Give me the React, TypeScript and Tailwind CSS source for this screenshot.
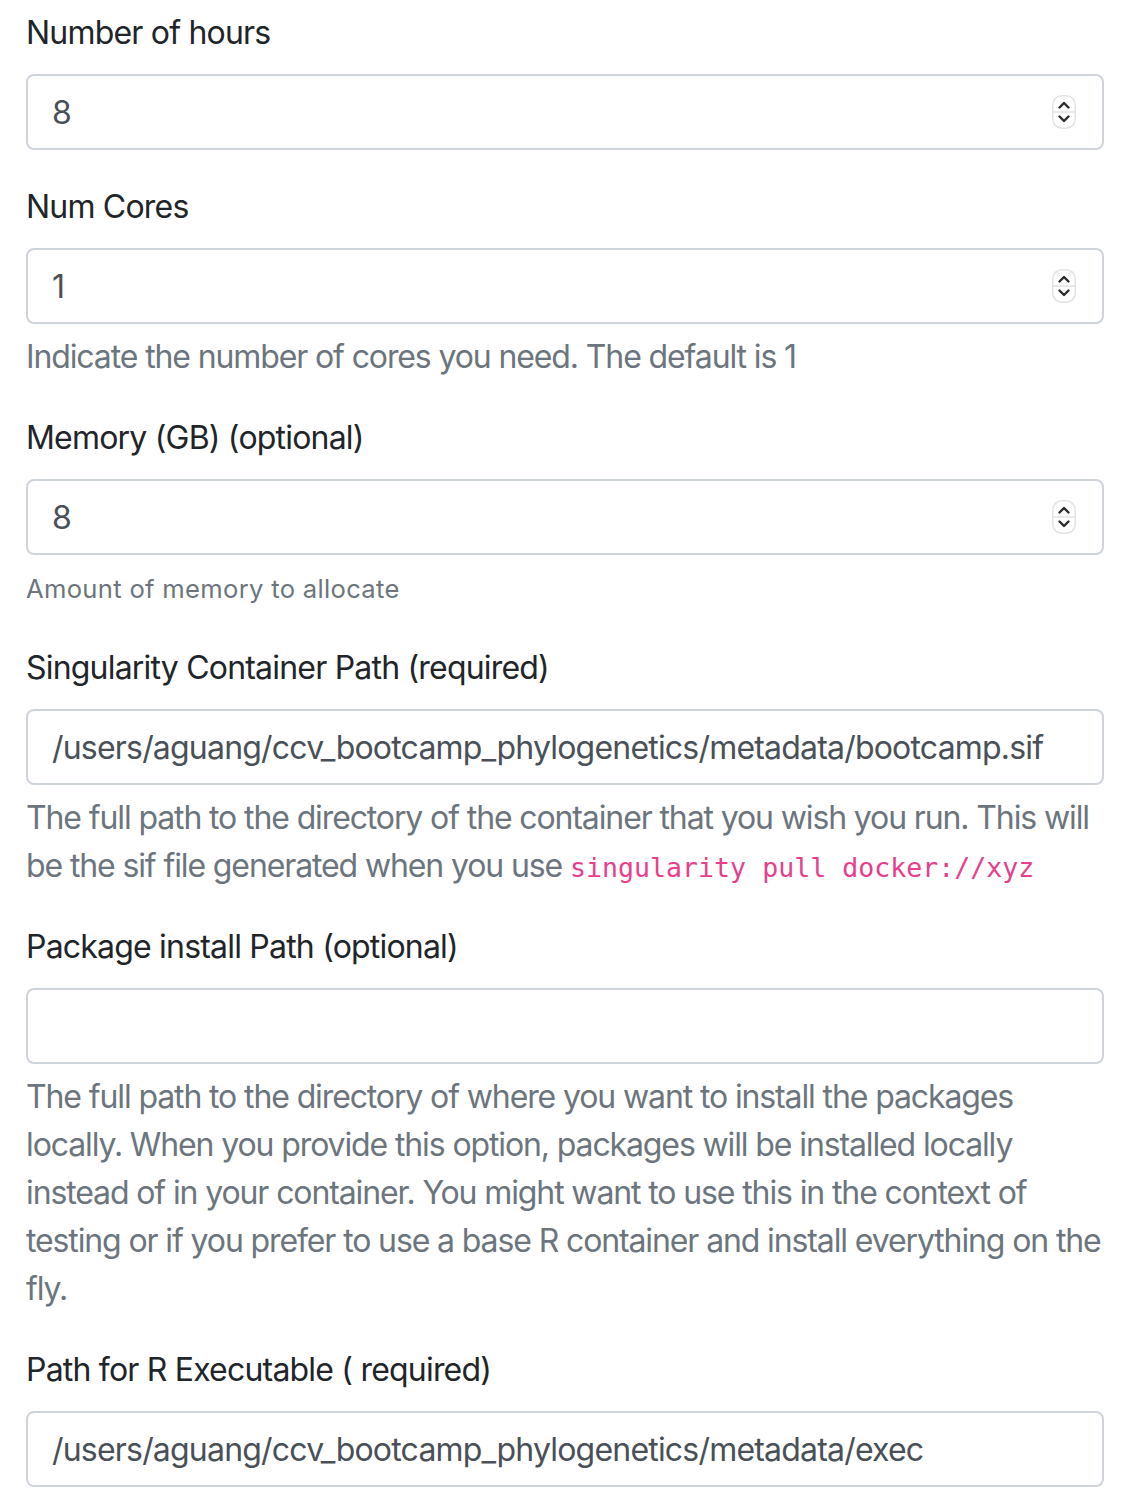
import React from 'react';

const FONT = { fontFamily: 'Inter, "Noto Sans", sans-serif' };

function Spinner() {
  return (
    <svg className="absolute right-[28px] top-1/2 -translate-y-1/2" width="24" height="34" viewBox="0 0 24 34" fill="none">
      <rect x="0.75" y="0.75" width="22.5" height="32.5" rx="9" fill="#fff" stroke="#e3e3e3" strokeWidth="1.5" />
      <line x1="1" y1="17" x2="23" y2="17" stroke="#e3e3e3" strokeWidth="1.5" />
      <path d="M7.5 12.5 L12 8 L16.5 12.5" stroke="#2b2b2b" strokeWidth="2.4" strokeLinecap="round" strokeLinejoin="round" />
      <path d="M7.5 21.5 L12 26 L16.5 21.5" stroke="#2b2b2b" strokeWidth="2.4" strokeLinecap="round" strokeLinejoin="round" />
    </svg>
  );
}

function Field({ label, value, number, children }: { label: string; value: string; number?: boolean; children?: React.ReactNode }) {
  return (
    <div className="mb-[33px]">
      <label className="block mb-[17px] text-[32px] leading-[48px] tracking-[-0.025em] text-[#212529]">{label}</label>
      <div className="relative">
        <input
          readOnly
          value={value}
          className="block w-full h-[76px] px-[24px] py-[12px] text-[32px] leading-[48px] tracking-[-0.025em] text-[#495057] bg-white border-2 border-[#ced4da] rounded-[8px] outline-none"
          style={FONT}
        />
        {number && <Spinner />}
      </div>
      {children}
    </div>
  );
}

function Help({ children }: { children: React.ReactNode }) {
  return <p className="mt-[9px] text-[32px] leading-[48px] tracking-[-0.035em] text-[#6c757d]">{children}</p>;
}

export default function App() {
  return (
    <div className="bg-white pl-[26px] pr-[40px] pt-[9px]" style={FONT}>
      <Field label="Number of hours" value="8" number />
      <Field label="Num Cores" value="1" number>
        <Help>Indicate the number of cores you need. The default is 1</Help>
      </Field>
      <Field label="Memory (GB) (optional)" value="8" number>
        <small className="block mt-[12px] text-[25.6px] leading-[44px] tracking-[0.012em] text-[#6c757d]">
          Amount of memory to allocate
        </small>
      </Field>
      <Field label="Singularity Container Path (required)" value="/users/aguang/ccv_bootcamp_phylogenetics/metadata/bootcamp.sif">
        <Help>
          The full path to the directory of the container that you wish you run. This will be the sif file generated when you use{' '}
          <code className="text-[26.6px] leading-none tracking-normal text-[#e83e8c]" style={{ fontFamily: '"DejaVu Sans Mono", monospace' }}>
            singularity pull docker://xyz
          </code>
        </Help>
      </Field>
      <Field label="Package install Path (optional)" value="">
        <Help>
          The full path to the directory of where you want to install the packages locally. When you provide this option, packages will be installed locally instead of in your container. You might want to use this in the context of testing or if you prefer to use a base R container and install everything on the fly.
        </Help>
      </Field>
      <Field label="Path for R Executable ( required)" value="/users/aguang/ccv_bootcamp_phylogenetics/metadata/exec" />
    </div>
  );
}
